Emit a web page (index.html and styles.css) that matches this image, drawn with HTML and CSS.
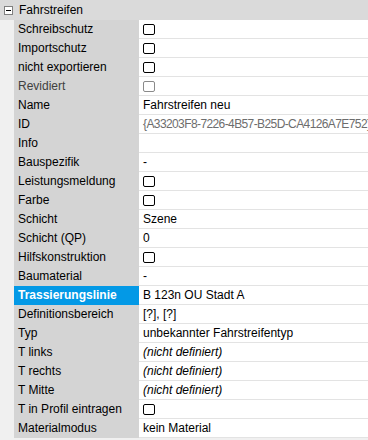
FILE: index.html
```html
<!DOCTYPE html>
<html lang="de">
<head>
    <meta charset="UTF-8">
    <meta name="viewport" content="width=device-width, initial-scale=1.0">
    <title>Eigenschaften</title>
    <link rel="stylesheet" href="styles.css">
</head>
<body>

    <div class="group-head">
        <span class="toggle"></span>
        <span>Fahrstreifen</span>
    </div>

    <div class="props">
        <div class="row"><div class="label">Schreibschutz</div><div class="value"><span class="check"></span></div></div>
        <div class="row"><div class="label">Importschutz</div><div class="value"><span class="check"></span></div></div>
        <div class="row"><div class="label">nicht exportieren</div><div class="value"><span class="check"></span></div></div>
        <div class="row"><div class="label disabled">Revidiert</div><div class="value"><span class="check disabled"></span></div></div>
        <div class="row"><div class="label">Name</div><div class="value">Fahrstreifen neu</div></div>
        <div class="row"><div class="label">ID</div><div class="value readonly">{A33203F8-7226-4B57-B25D-CA4126A7E752}</div></div>
        <div class="row"><div class="label">Info</div><div class="value"></div></div>
        <div class="row"><div class="label">Bauspezifik</div><div class="value">-</div></div>
        <div class="row"><div class="label">Leistungsmeldung</div><div class="value"><span class="check"></span></div></div>
        <div class="row"><div class="label">Farbe</div><div class="value"><span class="check"></span></div></div>
        <div class="row"><div class="label">Schicht</div><div class="value">Szene</div></div>
        <div class="row"><div class="label">Schicht (QP)</div><div class="value">0</div></div>
        <div class="row"><div class="label">Hilfskonstruktion</div><div class="value"><span class="check"></span></div></div>
        <div class="row"><div class="label">Baumaterial</div><div class="value">-</div></div>
        <div class="row selected"><div class="label">Trassierungslinie</div><div class="value">B 123n OU Stadt A</div></div>
        <div class="row"><div class="label">Definitionsbereich</div><div class="value">[?], [?]</div></div>
        <div class="row"><div class="label">Typ</div><div class="value">unbekannter Fahrstreifentyp</div></div>
        <div class="row"><div class="label">T links</div><div class="value undefined">(nicht definiert)</div></div>
        <div class="row"><div class="label">T rechts</div><div class="value undefined">(nicht definiert)</div></div>
        <div class="row"><div class="label">T Mitte</div><div class="value undefined">(nicht definiert)</div></div>
        <div class="row"><div class="label">T in Profil eintragen</div><div class="value"><span class="check"></span></div></div>
        <div class="row"><div class="label">Materialmodus</div><div class="value">kein Material</div></div>
    </div>

</body>
</html>
```

FILE: styles.css
```css
body {
    margin: 0;
    background-color: #f0f0f0;
    font-family: "Liberation Sans", Arial, sans-serif;
    font-size: 12px;
    color: #000;
}

.group-head {
    display: flex;
    align-items: center;
    gap: 6px;
    height: 20px;
    padding-left: 4px;
    background-color: #dadada;
}

.toggle {
    position: relative;
    width: 7px;
    height: 7px;
    border: 1px solid #808080;
    background-color: #fff;
}

.toggle::after {
    content: "";
    position: absolute;
    left: 1px;
    top: 3px;
    width: 5px;
    height: 1px;
    background-color: #000;
}

.props {
    margin-left: 14px;
}

.row {
    display: grid;
    grid-template-columns: 125px 1fr;
    height: 19px;
}

.label {
    background-color: #d4d4d4;
    padding-left: 4px;
    line-height: 19px;
    white-space: nowrap;
}

.label.disabled {
    color: #404040;
}

.value {
    display: flex;
    align-items: center;
    background-color: #fff;
    border-bottom: 1px solid #e3e3e3;
    padding-left: 4px;
    white-space: nowrap;
    overflow: hidden;
}

.value.readonly {
    color: #6d6d6d;
    letter-spacing: -0.6px;
}

.value.undefined {
    font-style: italic;
}

.selected .label {
    background-color: #0399e6;
    color: #fff;
    font-weight: bold;
}

.check {
    width: 10px;
    height: 9px;
    border: 1px solid #000;
    border-radius: 2px;
    background-color: #fff;
}

.check.disabled {
    border-color: #8a8a8a;
}
```
